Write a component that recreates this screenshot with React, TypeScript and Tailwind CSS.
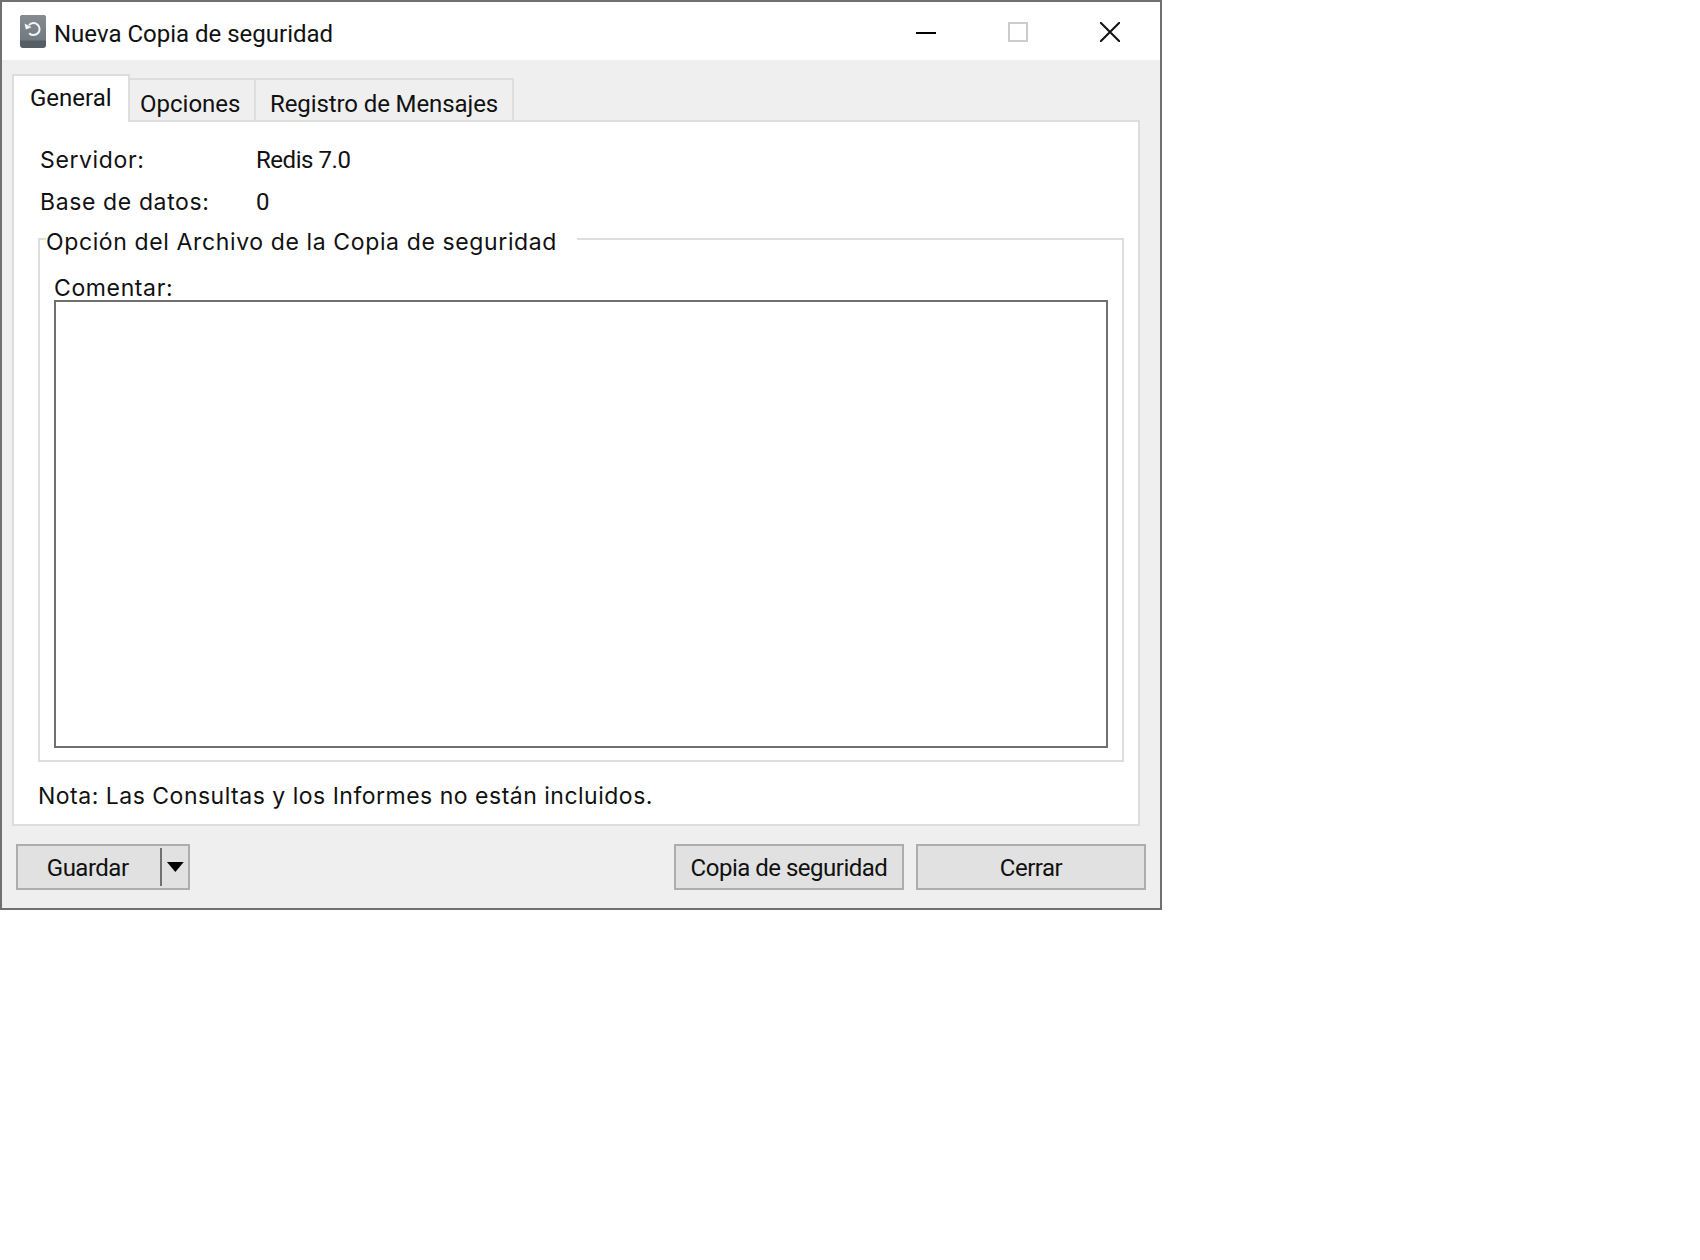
function BackupIcon() {
  return (
    <svg width="26" height="33" viewBox="0 0 26 33" className="shrink-0">
      <defs>
        <linearGradient id="iconFace" x1="0" y1="0" x2="0" y2="1">
          <stop offset="0" stopColor="#858c93" />
          <stop offset="1" stopColor="#717a81" />
        </linearGradient>
      </defs>
      <rect x="0" y="0" width="26" height="33" rx="3" fill="#545e64" />
      <path d="M3 0h20a3 3 0 0 1 3 3v22.5H0V3a3 3 0 0 1 3-3z" fill="url(#iconFace)" />
      <path d="M9 10.2a6 6 0 1 1 .2 8" fill="none" stroke="#f4f5f6" strokeWidth="2" />
      <path d="M4.6 8.6l1.2 5.8 5.8-2.2z" fill="#f4f5f6" />
    </svg>
  );
}

function WindowControls() {
  return (
    <div className="ml-auto mt-[2px] flex items-center">
      <svg width="20" height="20" viewBox="0 0 20 20" className="mr-[72px]">
        <path d="M0 11h20" stroke="#000" strokeWidth="2" />
      </svg>
      <div className="mr-[72px] h-[20px] w-[20px] border-2 border-[#cccccc]" />
      <svg width="20" height="20" viewBox="0 0 20 20" className="mr-[40px]">
        <path d="M0 0l20 20M20 0L0 20" stroke="#111" strokeWidth="2" />
      </svg>
    </div>
  );
}

function FooterButton({ label, width }: { label: string; width: string }) {
  return (
    <button className={`h-[46px] border-2 border-[#adadad] bg-[#e1e1e1] pt-[2px] text-[24px] tracking-[-0.5px] text-[#111] ${width}`}>
      {label}
    </button>
  );
}

export default function App() {
  const labelFont = "font-['Inter','Liberation_Sans',sans-serif] tracking-[0.62px] text-[23px]";

  return (
    <div className="h-[1260px] w-[1700px] bg-white font-['Roboto','Liberation_Sans',sans-serif]">
      <div className="flex h-[910px] w-[1162px] flex-col border-2 border-[#707070] bg-[#efefef] text-[#111]">
        <div className="flex h-[58px] items-center bg-white pl-[18px]">
          <BackupIcon />
          <span className="ml-[8px] mt-[6px] text-[24px]">Nueva Copia de seguridad</span>
          <WindowControls />
        </div>

        <div className="flex flex-1 flex-col px-[10px]">
          <div className="relative z-10 -mb-[2px] mt-[14px] flex items-end text-[24px]">
            <div className="h-[48px] w-[118px] border-2 border-b-0 border-[#dddddd] bg-white pl-[16px] pt-[4px]">General</div>
            <div className="-ml-px h-[44px] w-[127px] border-2 border-b-0 border-l-0 border-[#dddddd] pl-[11px] pt-[6px]">Opciones</div>
            <div className="h-[44px] w-[258px] border-2 border-b-0 border-l-0 border-[#dddddd] pl-[14px] pt-[6px] tracking-[-0.1px]">Registro de Mensajes</div>
          </div>

          <div className="flex h-[706px] w-[1128px] flex-col border-2 border-[#dddddd] bg-white pl-[24px] pr-[14px]">
            <div className={`ml-[2px] mt-[22px] flex h-[32px] items-center ${labelFont}`}>
              <span className="w-[216px]">Servidor:</span>
              <span className="font-['Roboto',sans-serif] text-[24px] tracking-[-0.45px]">Redis 7.0</span>
            </div>
            <div className={`ml-[2px] mt-[10px] flex h-[32px] items-center ${labelFont}`}>
              <span className="w-[216px]">Base de datos:</span>
              <span className="font-['Roboto',sans-serif] text-[24px] tracking-[-0.45px]">0</span>
            </div>

            <div className="relative mt-[20px] h-[524px] w-[1086px] border-2 border-[#dddddd] pl-[14px] pr-[14px] pt-[32px]">
              <span className={`absolute -top-[15px] left-[6px] bg-white pr-[20px] ${labelFont}`}>
                Opción del Archivo de la Copia de seguridad
              </span>
              <div className={`h-[28px] leading-[32px] ${labelFont}`}>Comentar:</div>
              <div className="h-[448px] w-[1054px] border-2 border-[#707070] bg-white" />
            </div>

            <div className="mt-[19px] h-[32px] font-['Inter','Liberation_Sans',sans-serif] text-[23px] leading-[31px] tracking-[0.5px]">
              Nota: Las Consultas y los Informes no están incluidos.
            </div>
          </div>

          <div className="mt-[18px] flex items-center pl-[4px] pr-[4px]">
            <div className="flex h-[46px] w-[174px] items-center border-2 border-[#adadad] bg-[#e1e1e1] text-[24px]">
              <span className="w-[144px] pr-[3px] pt-[2px] text-center tracking-[-0.5px]">Guardar</span>
              <div className="h-[38px] w-[2px] bg-[#707070]" />
              <svg width="26" height="12" viewBox="0 0 26 12">
                <path d="M5 1h17l-8.5 10z" fill="#000" />
              </svg>
            </div>
            <div className="ml-auto flex gap-[12px]">
              <FooterButton label="Copia de seguridad" width="w-[230px]" />
              <FooterButton label="Cerrar" width="w-[230px]" />
            </div>
          </div>
        </div>
      </div>
    </div>
  );
}
